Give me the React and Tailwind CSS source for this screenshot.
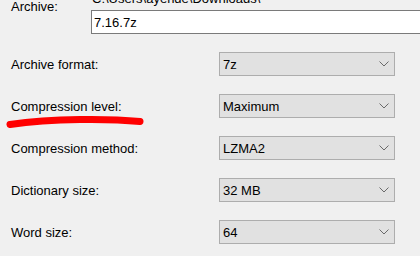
import React from "react";

function Chevron() {
  return (
    <svg width="10" height="6" viewBox="0 0 10 6" className="shrink-0">
      <path d="M0.5 0.5 L5 5 L9.5 0.5" fill="none" stroke="#6a6a6a" strokeWidth="1" />
    </svg>
  );
}

function Row({ label, value, underline }) {
  return (
    <div className="flex items-center h-[24px] mt-[18px] relative">
      <div className="w-[219px] shrink-0 pl-[11px] leading-[15px] whitespace-nowrap">{label}</div>
      <div className="w-[176px] shrink-0 h-[24px] border border-[#adadad] bg-[#e1e1e1] flex items-center justify-between pl-[3px] pr-[5px] leading-[15px]">
        <span>{value}</span>
        <Chevron />
      </div>
      {underline && (
        <svg
          className="absolute left-0 top-[20px] pointer-events-none"
          width="150"
          height="14"
          viewBox="0 0 150 14"
        >
          <path
            d="M10 10.5 Q 40 6 80 5.5 Q 115 5 140 7.5"
            fill="none"
            stroke="#ff0000"
            strokeWidth="7"
            strokeLinecap="round"
          />
        </svg>
      )}
    </div>
  );
}

export default function App() {
  return (
    <div className="w-[420px] h-[256px] bg-[#f0f0f0] overflow-hidden text-[13px] text-black font-['Liberation_Sans',Arial,sans-serif]">
      <div className="flex items-start mt-[-9px]">
        <div className="w-[91px] shrink-0 pl-[11px] pt-[8px] leading-[15px]">Archive:</div>
        <div className="flex flex-col flex-1 min-w-0">
          <div className="h-[15px] leading-[15px] pl-[1px] whitespace-nowrap">C:\Users\ayende\Downloads\</div>
          <div className="mt-[4px] h-[24px] w-[360px] shrink-0 border border-[#7a7a7a] bg-white flex items-center pl-[2px] leading-[15px]">
            7.16.7z
          </div>
        </div>
      </div>
      <Row label="Archive format:" value="7z" />
      <Row label="Compression level:" value="Maximum" underline />
      <Row label="Compression method:" value="LZMA2" />
      <Row label="Dictionary size:" value="32 MB" />
      <Row label="Word size:" value="64" />
    </div>
  );
}
